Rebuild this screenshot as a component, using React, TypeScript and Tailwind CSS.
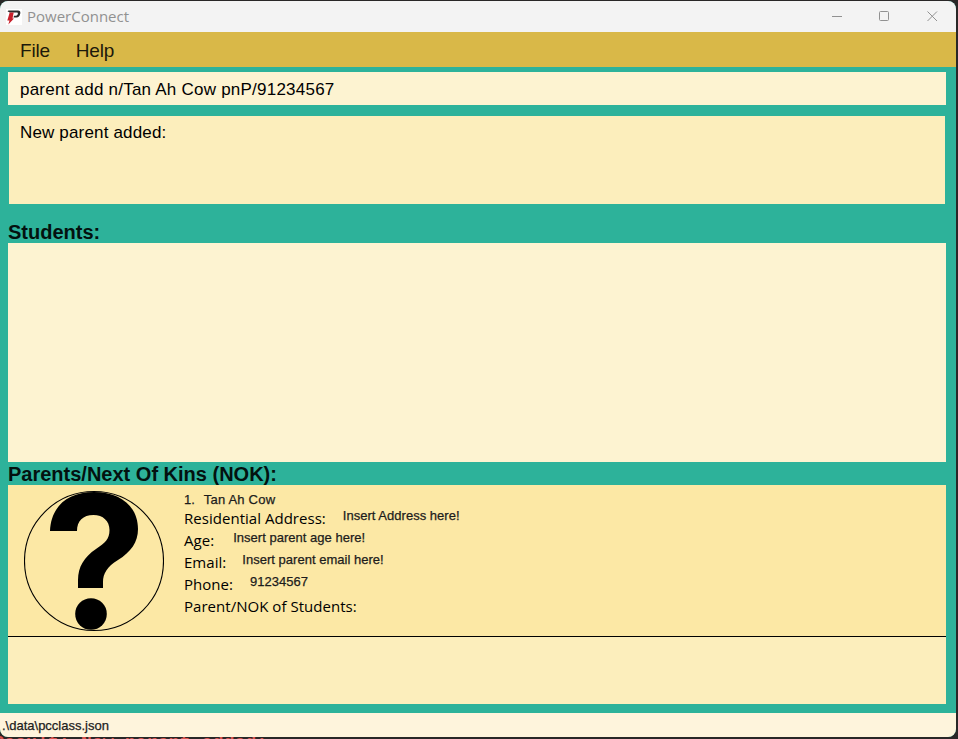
const arial = "font-['Liberation_Sans',Arial,sans-serif]";
const segoe = "font-['Open_Sans','Noto_Sans',sans-serif]";
const small = "text-[13px] text-[#1c1c1c] [-webkit-text-stroke:0.25px_#1c1c1c]";

function TitleBar() {
  return (
    <header className="flex h-[31px] shrink-0 items-center bg-[#f3f3f3] pl-1.5 text-[#919191]">
      <svg width="16" height="16" viewBox="0 0 16 16" className="shrink-0">
        <rect width="16" height="16" fill="#fff" />
        <path d="M2.500 1.500H12Q14.800 1.500 14.300 4.500Q13.500 8.500 10.500 8.500H7.500L8 6.800H10.200Q11.600 6.500 11.900 4.800Q12 3.700 11 3.600H3.600L1.500 2.200Z" fill="#2b2b2b" />
        <path d="M3.700 3.600H7.700L6.500 9.500H8L2.300 15.500L3.500 11.500H1.300Z" fill="#c8202b" />
      </svg>
      <h1 className={`${segoe} -mt-0.5 ml-[5px] text-[15px] leading-5`}>PowerConnect</h1>
      <div className="ml-auto flex items-center gap-[37px] pr-[18px]">
        <svg width="11" height="11" viewBox="0 0 11 11"><path d="M1 5.5H11" stroke="#919191" /></svg>
        <svg width="11" height="11" viewBox="0 0 11 11"><rect x=".5" y=".5" width="9" height="9" rx="1" fill="none" stroke="#919191" /></svg>
        <svg width="11" height="11" viewBox="0 0 11 11"><path d="M.5 .5L10 10M10 .5L.5 10" stroke="#919191" /></svg>
      </div>
    </header>
  );
}

function Avatar() {
  return (
    <svg width="140" height="142" viewBox="24 490 140 142" className="ml-4 mt-[5px] shrink-0">
      <circle cx="94" cy="561" r="69.5" fill="none" stroke="#000" strokeWidth="1.1" />
      <path
        d="M50 531C51 507 67 492 94 492C121 492 138 507 138 529C138 542 131 552 118 560C107 566.500 103 574 103 582V588H78V580C78 567 84 557 96 549C105 543 109.500 539 109.500 530C109.500 521 103 515 93.500 515C83 515 77 521 77 531Z"
        fill="#000"
      />
      <circle cx="91" cy="614" r="15.8" />
    </svg>
  );
}

function Field({ label, value, gap }: { label: string; value?: string; gap?: string }) {
  return (
    <div className="flex h-[22px] items-start">
      <span className={`${segoe} -mt-px text-[15px] leading-[22px] tracking-[0.03px] text-black`}>{label}</span>
      {value && <span className={`${gap} ${small} leading-4 tracking-[0.02px]`}>{value}</span>}
    </div>
  );
}

export default function App() {
  return (
    <div className={`${arial} relative h-[739px] w-[958px] overflow-hidden bg-[#292727] pt-px`}>
      <div className="absolute bottom-[-14px] left-[-7px] whitespace-pre font-['Liberation_Mono',monospace] text-[18.300px] font-bold leading-5 text-[#d9534f]">
        Result: New parent added:
      </div>
      <main className="relative flex h-[736px] w-[956px] flex-col overflow-hidden rounded-lg bg-[#2db29a]">
        <TitleBar />
        <nav className="flex h-[35px] shrink-0 items-center gap-[26px] bg-[#d9b848] pl-5 pt-[3px] text-[19px] tracking-[-0.2px] text-[#1c190b]">
          <span>File</span>
          <span>Help</span>
        </nav>
        <div className="ml-2 mr-[10px] mt-[5px] flex h-[33px] shrink-0 items-center bg-[#fdf3d1] pl-3 pt-0.5 text-[17px] tracking-[0.23px] text-black">
          parent add n/Tan Ah Cow pnP/91234567
        </div>
        <div className="ml-[9px] mr-[11px] mt-[11px] h-[88px] shrink-0 bg-[#fceebc] pl-[11px] pt-[7px] text-[17px] leading-5 tracking-[0.16px] text-black">
          New parent added:
        </div>
        <h2 className="ml-2 mt-[17px] h-[22px] shrink-0 text-[20px] font-bold leading-[22px] text-[#03110f]">Students:</h2>
        <section className="ml-2 mr-[10px] h-[219px] shrink-0 bg-[#fdf3d1]" />
        <h2 className="ml-2 h-[23px] shrink-0 text-[20px] font-bold leading-[25px] text-[#03110f]">Parents/Next Of Kins (NOK):</h2>
        <section className="ml-2 mr-[10px] h-[219px] shrink-0 bg-[#fceebc]">
          <article className="flex h-[152px] border-b border-black bg-[#fce8a5]">
            <Avatar />
            <div className="ml-5 pt-1.5">
              <div className={`flex h-[17px] gap-[9px] leading-[17px] ${small}`}>
                <span>1.</span>
                <span className="tracking-[0.2px]">Tan Ah Cow</span>
              </div>
              <Field label="Residential Address:" value="Insert Address here!" gap="ml-[17px]" />
              <Field label="Age:" value="Insert parent age here!" gap="ml-[19px]" />
              <Field label="Email:" value="Insert parent email here!" gap="ml-4" />
              <Field label="Phone:" value="91234567" gap="ml-[17px]" />
              <Field label="Parent/NOK of Students:" />
            </div>
          </article>
        </section>
        <footer className={`mt-[9px] h-6 shrink-0 bg-[#fef4dc] pl-0.5 leading-[26px] ${small}`}>.\data\pcclass.json</footer>
      </main>
    </div>
  );
}
